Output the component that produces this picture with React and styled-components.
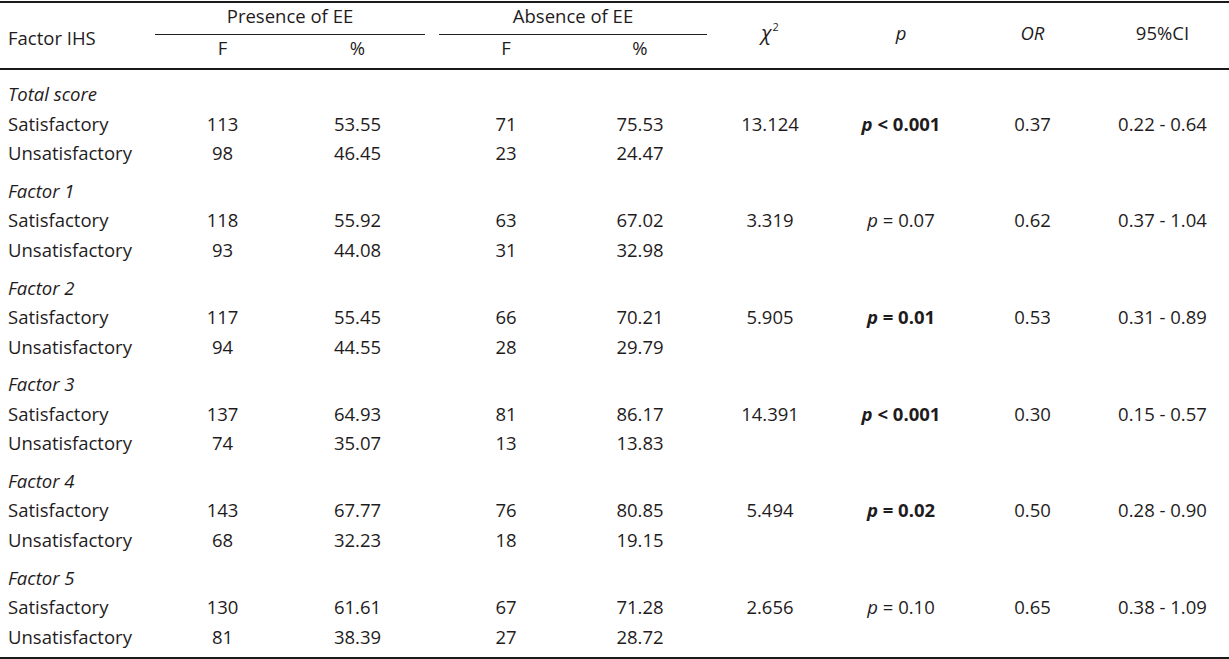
import React from 'react'
import styled, { createGlobalStyle } from 'styled-components'

const GlobalStyle = createGlobalStyle`
  html, body {
    margin: 0;
    padding: 0;
    background: #ffffff;
  }
  body {
    font-family: 'Open Sans', 'Noto Sans', sans-serif;
    color: #1f1c1d;
  }
`

const Table = styled.table`
  width: 1229px;
  margin-top: 1px;
  table-layout: fixed;
  border-collapse: separate;
  border-spacing: 0;
  border-top: 2px solid #1a1a1a;
  font-size: 18.5px;
  color: #1f1c1d;
`

const HeadCell = styled.th`
  font-weight: 400;
  font-style: ${(p) => (p.$italic ? 'italic' : 'normal')};
  text-align: ${(p) => (p.$left ? 'left' : 'center')};
  vertical-align: top;
  line-height: 24px;
  padding: ${(p) => p.$top || 0}px 0 0 ${(p) => (p.$left ? 8 : 0)}px;
  border-bottom: 2px solid #1a1a1a;
  white-space: nowrap;
`

const GroupCell = styled.th`
  font-weight: 400;
  text-align: center;
  vertical-align: top;
  line-height: 24px;
  padding: 1px 0 6px;
  border-bottom: 1px solid #231f20;
`

const SpacerCell = styled.th`
  padding: 0;
  border-bottom: 2px solid #1a1a1a;
`

const SubCell = styled.th`
  font-weight: 400;
  text-align: center;
  vertical-align: top;
  line-height: 25px;
  padding: 0 0 8px;
  border-bottom: 2px solid #1a1a1a;
`

const Chi = styled.span`
  font-style: italic;
  font-size: 20px;
`

const Sup = styled.sup`
  font-size: 11px;
  font-style: normal;
  vertical-align: 9px;
  line-height: 0;
  margin-left: 1px;
`

const Row = styled.tr`
  & > td {
    line-height: 29.5px;
    padding: 0;
  }
`

const GroupRow = styled.tr`
  & > td {
    line-height: 29.5px;
    padding: ${(p) => (p.$first ? 9.2 : 8.2)}px 0 0 8px;
    font-style: italic;
    text-align: left;
  }
`

const LastRow = styled(Row)`
  & > td {
    padding-bottom: 5.5px;
    border-bottom: 2px solid #1a1a1a;
  }
`

const LabelCell = styled.td`
  text-align: left;
  padding-left: 8px !important;
  white-space: nowrap;
`

const NumCell = styled.td`
  text-align: center;
  white-space: nowrap;
`

const PValue = styled.span`
  font-weight: ${(p) => (p.$bold ? 700 : 400)};
  & > i {
    font-style: italic;
  }
`

const widths = [155, 135, 135, 14, 134, 134, 126, 136, 127, 133]

const groups = [
  {
    label: 'Total score',
    sat: ['113', '53.55', '71', '75.53'],
    unsat: ['98', '46.45', '23', '24.47'],
    chi: '13.124',
    p: { op: '<', v: '0.001', bold: true },
    or: '0.37',
    ci: '0.22 - 0.64',
  },
  {
    label: 'Factor 1',
    sat: ['118', '55.92', '63', '67.02'],
    unsat: ['93', '44.08', '31', '32.98'],
    chi: '3.319',
    p: { op: '=', v: '0.07', bold: false },
    or: '0.62',
    ci: '0.37 - 1.04',
  },
  {
    label: 'Factor 2',
    sat: ['117', '55.45', '66', '70.21'],
    unsat: ['94', '44.55', '28', '29.79'],
    chi: '5.905',
    p: { op: '=', v: '0.01', bold: true },
    or: '0.53',
    ci: '0.31 - 0.89',
  },
  {
    label: 'Factor 3',
    sat: ['137', '64.93', '81', '86.17'],
    unsat: ['74', '35.07', '13', '13.83'],
    chi: '14.391',
    p: { op: '<', v: '0.001', bold: true },
    or: '0.30',
    ci: '0.15 - 0.57',
  },
  {
    label: 'Factor 4',
    sat: ['143', '67.77', '76', '80.85'],
    unsat: ['68', '32.23', '18', '19.15'],
    chi: '5.494',
    p: { op: '=', v: '0.02', bold: true },
    or: '0.50',
    ci: '0.28 - 0.90',
  },
  {
    label: 'Factor 5',
    sat: ['130', '61.61', '67', '71.28'],
    unsat: ['81', '38.39', '27', '28.72'],
    chi: '2.656',
    p: { op: '=', v: '0.10', bold: false },
    or: '0.65',
    ci: '0.38 - 1.09',
  },
]

function Counts({ values }) {
  return (
    <>
      <NumCell>{values[0]}</NumCell>
      <NumCell>{values[1]}</NumCell>
      <td />
      <NumCell>{values[2]}</NumCell>
      <NumCell>{values[3]}</NumCell>
    </>
  )
}

function Group({ group, first, last }) {
  const Bottom = last ? LastRow : Row
  return (
    <>
      <GroupRow $first={first}>
        <td colSpan={10}>{group.label}</td>
      </GroupRow>
      <Row>
        <LabelCell>Satisfactory</LabelCell>
        <Counts values={group.sat} />
        <NumCell>{group.chi}</NumCell>
        <NumCell>
          <PValue $bold={group.p.bold}>
            <i>p</i> {group.p.op} {group.p.v}
          </PValue>
        </NumCell>
        <NumCell>{group.or}</NumCell>
        <NumCell>{group.ci}</NumCell>
      </Row>
      <Bottom>
        <LabelCell>Unsatisfactory</LabelCell>
        <Counts values={group.unsat} />
        <td />
        <td />
        <td />
        <td />
      </Bottom>
    </>
  )
}

export default function App() {
  return (
    <>
      <GlobalStyle />
      <Table>
        <colgroup>
          {widths.map((w, i) => (
            <col key={i} style={{ width: w }} />
          ))}
        </colgroup>
        <thead>
          <tr>
            <HeadCell rowSpan={2} $left $top={23}>
              Factor IHS
            </HeadCell>
            <GroupCell colSpan={2}>Presence of EE</GroupCell>
            <SpacerCell rowSpan={2} />
            <GroupCell colSpan={2}>Absence of EE</GroupCell>
            <HeadCell rowSpan={2} $top={18}>
              <Chi>χ</Chi>
              <Sup>2</Sup>
            </HeadCell>
            <HeadCell rowSpan={2} $italic $top={18}>
              p
            </HeadCell>
            <HeadCell rowSpan={2} $italic $top={18}>
              OR
            </HeadCell>
            <HeadCell rowSpan={2} $top={18}>
              95%CI
            </HeadCell>
          </tr>
          <tr>
            <SubCell>F</SubCell>
            <SubCell>%</SubCell>
            <SubCell>F</SubCell>
            <SubCell>%</SubCell>
          </tr>
        </thead>
        <tbody>
          {groups.map((g, i) => (
            <Group key={g.label} group={g} first={i === 0} last={i === groups.length - 1} />
          ))}
        </tbody>
      </Table>
    </>
  )
}
